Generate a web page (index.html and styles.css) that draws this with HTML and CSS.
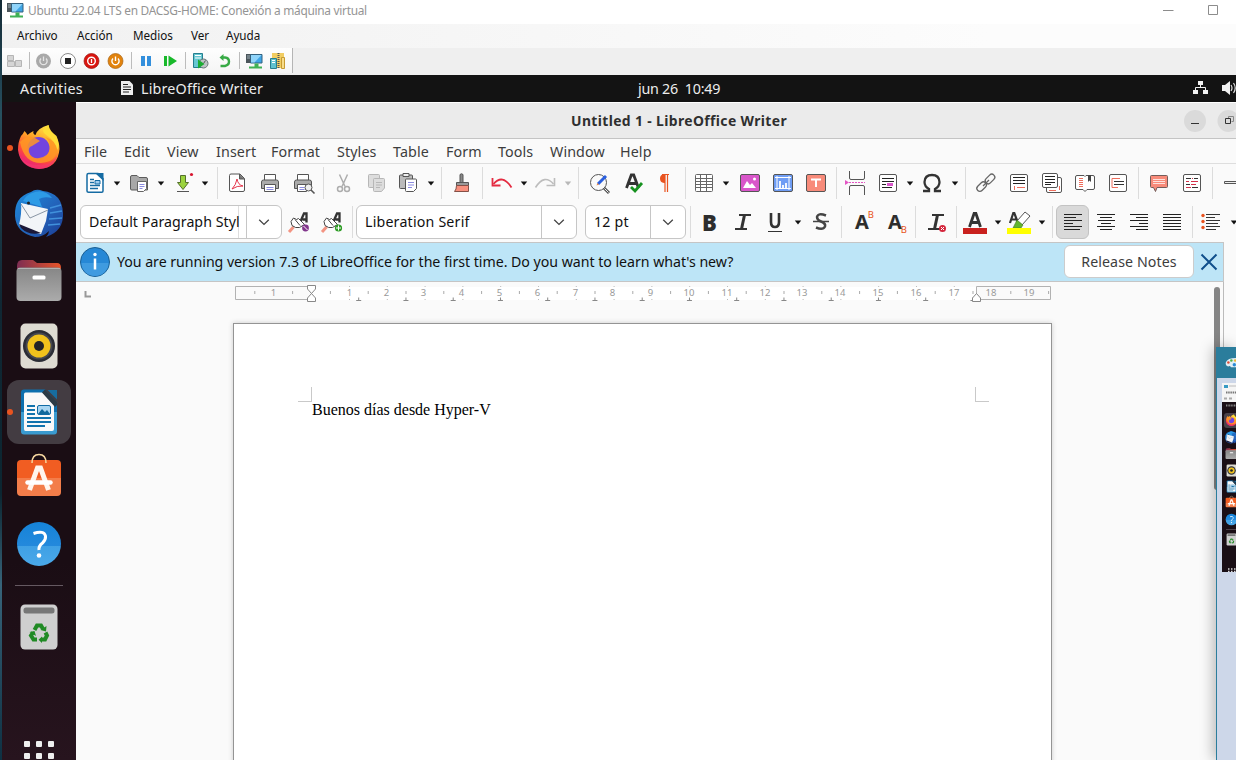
FILE: index.html
```html
<!DOCTYPE html>
<html lang="es">
<head>
<meta charset="utf-8">
<title>Ubuntu 22.04 LTS en DACSG-HOME: Conexión a máquina virtual</title>
<link rel="stylesheet" href="styles.css">
</head>
<body>
<svg class="defs" width="0" height="0">
  <defs>
    <linearGradient id="fox" x1="0.8" y1="0" x2="0.3" y2="1"><stop offset="0" stop-color="#fff04a"/><stop offset=".4" stop-color="#ffa126"/><stop offset=".72" stop-color="#ff4a3c"/><stop offset="1" stop-color="#e3168a"/></linearGradient>
    <linearGradient id="bird" x1="0" y1="0" x2="1" y2="1"><stop offset="0" stop-color="#1e8fe0"/><stop offset=".6" stop-color="#2361b8"/><stop offset="1" stop-color="#1b3a92"/></linearGradient>
    <linearGradient id="folder" x1="0" y1="0" x2="0" y2="1"><stop offset="0" stop-color="#868686"/><stop offset="1" stop-color="#ababab"/></linearGradient>
    <linearGradient id="tab" x1="0" y1="0" x2="1" y2="0"><stop offset="0" stop-color="#7d2d52"/><stop offset="1" stop-color="#e8552a"/></linearGradient>
    <linearGradient id="bag" x1="0" y1="0" x2="0" y2="1"><stop offset=".5" stop-color="#f15d22"/><stop offset=".5" stop-color="#f37d4a"/></linearGradient>
    <linearGradient id="help" x1="0" y1="0" x2="0" y2="1"><stop offset="0" stop-color="#1583d8"/><stop offset=".54" stop-color="#2389dc"/><stop offset=".54" stop-color="#3fa0e4"/><stop offset="1" stop-color="#4aa9ea"/></linearGradient>
    <linearGradient id="wr" x1="0" y1="0" x2="0" y2="1"><stop offset=".5" stop-color="#0d6fae"/><stop offset=".5" stop-color="#3a9bd0"/></linearGradient>
    <symbol id="i-arr" viewBox="0 0 8 24"><path d="M.8 10.600h6.400L4 14.600z" fill="currentColor"/></symbol>
    <symbol id="i-chev" viewBox="0 0 12 12"><path d="M1.200 3.800 6 8.400l4.800-4.600" fill="none" stroke="#444" stroke-width="1.300"/></symbol>
    <symbol id="v-conn" viewBox="0 0 20 20"><path d="M2 3h6v9H2z" fill="#4b555b"/><path d="M3 5h3M3 7h3" stroke="#9fb0b8"/><path d="M6.500 3.500h11.500v8.500H6.500z" fill="#3fa5e6" stroke="#33617f"/><path d="M7 4h10.500l-7 7.500H7z" fill="#8fd4fa"/><path d="M10.500 12.500h4v3h3.500v2H5v-2h5.500z" fill="#3fb155"/></symbol>
    <symbol id="d-fox" viewBox="0 0 64 64"><path d="M14 20q2-2 3.500-5 2 2 3 4 2-2 6-4-1 3 2 4 2-7 13-10 0 6 4 8 7 7 7 16Q51 52 32 53 13 51 11 34q0-8 3-14z" fill="url(#fox)"/><circle cx="31.500" cy="32" r="11" fill="#7244df"/><path d="M13 26q7-7 15-4l5 3-8 5q-4 1-3 6 2 7 10 6 9-1 11-9 1-8-5-12 11 3 12 13-1 12-16 13-17 0-21-21z" fill="#ff9825" opacity=".85"/><path d="M38 18q-5-4 3.500-9 1 6 8 11 4 9 1 14-2-9-12.500-16z" fill="#ffdd38"/><path d="M12 38q5 12 20 11 13 0 18-9-3 12-18 13-16-1-20-15z" fill="#f4386b" opacity=".75"/></symbol>
    <symbol id="d-bird" viewBox="0 0 64 64"><path d="M8 34Q7 15 24 10q5-4 12-1 19 2 20 22 1 18-17 24 3-3 3-6-6 6-14 6Q9 51 8 34z" fill="url(#bird)"/><path d="M25 11q12-5 20 5-8-2-13 1l3 8-19-6q3-6 9-8z" fill="#2d9be6"/><path d="m14 21 27 6-2 12-5 13q-12-2-22-9 3-12 2-22z" fill="#f2f5f8"/><path d="m14 22 9 14 18-8" fill="none" stroke="#8996a5"/><path d="m12 42 22 9q-12 3-20-5z" fill="#1b1838"/><path d="m43 26 11-3m-11 8 12-2m-13 8 13-1m-14 7 12-1" stroke="#4191dc" stroke-width="1.500"/><circle cx="21.500" cy="21" r="1.500" fill="#222"/></symbol>
    <symbol id="d-files" viewBox="0 0 64 64"><path d="M10 18q0-6 5-6h11l4 3h20q4 0 4 5v8H10z" fill="url(#tab)"/><rect x="9.500" y="19.500" width="45" height="33.500" rx="4" fill="url(#folder)"/><path d="M11 20.500h42" stroke="#b2b2b2"/><rect x="25.500" y="27.500" width="13" height="4" rx="1.500" fill="#fff"/></symbol>
    <symbol id="d-rhythm" viewBox="0 0 64 64"><rect x="13.500" y="9.500" width="37" height="45" rx="5" fill="#dedbd2"/><circle cx="32" cy="32" r="16" fill="#2b2d35"/><circle cx="32" cy="32" r="13.500" fill="#454750"/><circle cx="32" cy="32" r="11.500" fill="#f1c21c"/><circle cx="32" cy="32" r="5" fill="#222326"/></symbol>
    <symbol id="d-writer" viewBox="0 0 64 64"><path d="M17 9.500h21l12 13v29q0 3-3 3H17q-3 0-3-3v-39q0-3 3-3z" fill="url(#wr)"/><path d="M18.500 12.500h17L47 25v24q0 2-2 2H18.500Q17 51 17 49V14.500q0-2 1.500-2z" fill="#f9f9f9"/><path d="m35 12.500 3-3L50 22v3l-2 2z" fill="#2c3b46"/><path d="M40.500 10H50v9.500z" fill="#176d9f"/><path d="M20 26h8m-8 4h8m-8 4h8m-8 4h24m-24 4h24m-24 4h18" stroke="#1173ad" stroke-width="2"/><rect x="30.500" y="25.500" width="13" height="9" rx="1.500" fill="#a9d6f2" stroke="#116ca5"/><path d="m31 34 4-5 3 3 2-2 3 4z" fill="#11699c"/></symbol>
    <symbol id="d-bag" viewBox="0 0 64 64"><rect x="10" y="14" width="44" height="36" rx="4" fill="url(#bag)"/><path d="M25 17q0-8.500 7-8.500t7 8.500" fill="none" stroke="#f6d7a0" stroke-width="1.500"/><path d="m22.500 44 8-22h3l8 22" fill="none" stroke="#fff5ed" stroke-width="5"/><path d="M20.500 36.500h23" stroke="#fff" stroke-width="4.500" stroke-linecap="round"/></symbol>
    <symbol id="d-help" viewBox="0 0 64 64"><circle cx="32" cy="32" r="22" fill="url(#help)"/><path d="M26.500 21.500Q37 18 38.500 24q.5 4-3 7-4 3-3.500 7" fill="none" stroke="#fff" stroke-width="3"/><circle cx="32" cy="43.500" r="2.300" fill="#fff"/></symbol>
    <symbol id="d-trash" viewBox="0 0 64 64"><rect x="13.500" y="9.500" width="37" height="45" rx="4.500" fill="#cfcfcf"/><rect x="16.500" y="12.500" width="31" height="6" rx="2.500" fill="#777"/><g fill="none" stroke="#208a24" stroke-width="4"><path d="m27.500 35 2.500-4.500h4l2 3.500"/><path d="m38.500 37.500 1.500 3-2 4h-3.500"/><path d="M30 44.500h-3.500L24 40.500l2-3"/></g><path d="m33.500 35 5.500 1.500.5-5.500zM35 41.500v6.500l-3.500-3.300zM22.500 37l5-1 1.500 5z" fill="#208a24"/></symbol>
  </defs>
</svg>
<div class="screen">
  <div class="edge"></div>
  <main class="vm">
    <header class="vm-title">
      <svg width="18" height="18" viewBox="1 1 18 18"><use href="#v-conn" width="20" height="20"/></svg>
      <span class="vm-name">Ubuntu 22.04 LTS en DACSG-HOME: Conexión a máquina virtual</span>
      <svg class="vm-ctl" width="60" height="20" viewBox="0 0 60 20" fill="none" stroke="#8c8c8c"><path d="M2 10.500h10.500"/><path d="M47.500 5.500h9v9h-9z"/></svg>
    </header>
    <nav class="vm-menu"><span>Archivo</span><span>Acción</span><span>Medios</span><span>Ver</span><span>Ayuda</span></nav>
    <div class="vm-tools"><div class="vm-band">
      <svg viewBox="0 0 20 20" fill="#d5d5d5" stroke="#b5b5b5"><path d="M2.500 4.500h6v5h-6zM2.500 10.500h7v5h-7zM10.500 9.500h6v6h-6z"/></svg>
      <i class="vsep"></i>
      <svg viewBox="0 0 20 20"><circle cx="9.500" cy="10" r="7.500" fill="#a9a9a9"/><path d="M7 7.500a3.600 3.600 0 1 0 5 0M9.500 5.500v4.500" fill="none" stroke="#e5e5e5" stroke-width="1.300"/></svg>
      <svg viewBox="0 0 20 20"><circle cx="10" cy="10" r="7.500" fill="#fff" stroke="#8b8b8b"/><path d="M7 7h6v6H7z" fill="#222"/></svg>
      <svg viewBox="0 0 20 20"><circle cx="9.500" cy="10" r="7.500" fill="#d9150f" stroke="#9d1310" stroke-width=".7"/><circle cx="9.500" cy="10" r="3.800" fill="none" stroke="#fff" stroke-width="1.400"/><path d="M9.500 8v4" stroke="#fff" stroke-width="1.300"/></svg>
      <svg viewBox="0 0 20 20"><circle cx="9.500" cy="10" r="7.500" fill="#e2830d" stroke="#a96414" stroke-width=".7"/><path d="M7 7.500a3.600 3.600 0 1 0 5 0M9.500 5.500v4.500" fill="none" stroke="#fff" stroke-width="1.400"/></svg>
      <i class="vsep"></i>
      <svg viewBox="0 0 20 20" fill="#338fdc"><path d="M5 5h4v10H5zM11 5h4v10h-4z"/></svg>
      <svg viewBox="0 0 20 20" fill="#19b92b"><path d="M4 5h3v10H4zM8.500 4.500 17 10l-8.500 5.500z"/></svg>
      <i class="vsep"></i>
      <svg viewBox="0 0 20 20"><path d="M3.500 2.500h9v14h-9z" fill="#67c7d2" stroke="#257e8f"/><path d="M5 4.500h6M5 7h6" stroke="#fff"/><circle cx="13.500" cy="12.500" r="4.500" fill="#bcc3c4" stroke="#697577"/><path d="m13.500 12.500 2-3" stroke="#555"/><path d="m8 8.500 6.500 4.500L8 17.500z" fill="#1bad33"/></svg>
      <svg viewBox="0 0 20 20"><path d="M8 6.500h3q4 .5 4 4t-4 4.500H6.500" fill="none" stroke="#37aa45" stroke-width="2.400"/><path d="M9.500 3v7L5.500 6.500z" fill="#37aa45"/></svg>
      <i class="vsep"></i>
      <svg viewBox="0 0 20 20"><use href="#v-conn"/></svg>
      <svg viewBox="0 0 20 20"><path d="M5 2h12v15H5z" fill="#f1cd62"/><path d="M11.500 2v15" stroke="#555" stroke-width="2" stroke-dasharray="1 1"/><path d="M3.500 7.500h6v10h-6z" fill="#60c2d1" stroke="#287f90"/><path d="M14.500 6.500h3v11h-3z" fill="#f7dc8a" stroke="#c79b32"/><path d="M5 9.500h3m-3 2h3" stroke="#fff"/></svg>
    </div></div>
    <div class="gnome-bar">
      <span class="act">Activities</span>
      <svg width="14" height="16" viewBox="0 0 14 16"><path d="M1 1h8.500L13 4.500V15H1z" fill="#eee"/><path d="M3 4.500h5M3 7h8M3 9.500h8M3 12h6" stroke="#222"/></svg>
      <span class="appname">LibreOffice Writer</span>
      <span class="clock">jun 26&nbsp; 10:49</span>
      <svg class="tray" width="44" height="20" viewBox="0 0 44 20"><g fill="#f2f2f2"><path d="M6 3h5v4H6zM1 12h5v4H1zM11 12h5v4h-5z"/><path d="M8.500 7v3M3.500 12v-2.500h10V12" fill="none" stroke="#f2f2f2"/><path d="M30 7h3l5-4v14l-5-4h-3z"/></g><path d="M39 7q2 3 0 6m2.500-8q3.500 5 0 10" fill="none" stroke="#ddd" stroke-width="1.200"/></svg>
    </div>
    <div class="desktop">
      <aside class="dock">
        <div class="app run"><svg viewBox="0 0 64 64"><use href="#d-fox"/></svg></div>
        <div class="app"><svg viewBox="0 0 64 64"><use href="#d-bird"/></svg></div>
        <div class="app"><svg viewBox="0 0 64 64"><use href="#d-files"/></svg></div>
        <div class="app"><svg viewBox="0 0 64 64"><use href="#d-rhythm"/></svg></div>
        <div class="app run focus"><svg viewBox="0 0 64 64"><use href="#d-writer"/></svg></div>
        <div class="app"><svg viewBox="0 0 64 64"><use href="#d-bag"/></svg></div>
        <div class="app"><svg viewBox="0 0 64 64"><use href="#d-help"/></svg></div>
        <hr>
        <div class="app"><svg viewBox="0 0 64 64"><use href="#d-trash"/></svg></div>
        <svg class="grid-dots" width="30" height="19" viewBox="0 0 30 19" fill="#efefef"><rect width="6" height="6" rx="1"/><rect x="12" width="6" height="6" rx="1"/><rect x="24" width="6" height="6" rx="1"/><rect y="12" width="6" height="6" rx="1"/><rect x="12" y="12" width="6" height="6" rx="1"/><rect x="24" y="12" width="6" height="6" rx="1"/></svg>
      </aside>
      <section class="office">
        <div class="lo-title"><span>Untitled 1 - LibreOffice Writer</span>
          <svg class="lo-ctl" width="52" height="22" viewBox="0 0 52 22"><circle cx="11" cy="11" r="11" fill="#dadada"/><path d="M7 13.500h8" stroke="#333"/><circle cx="44.500" cy="11" r="11" fill="#dadada"/><path d="M44.500 8.500v-2h5v5h-2" fill="none" stroke="#888"/><path d="M41.500 8.500h5v5h-5z" fill="#dadada" stroke="#333"/></svg>
        </div>
        <nav class="lo-menu"><span>File</span><span>Edit</span><span>View</span><span>Insert</span><span>Format</span><span>Styles</span><span>Table</span><span>Form</span><span>Tools</span><span>Window</span><span>Help</span></nav>
        <div class="tb tb1">
          <svg class="ic" viewBox="0 0 24 24"><path d="M5.500 2.500H15L20 7.500V20q0 1.200-1.200 1.200H5.500Q4 21.200 4 20V4q0-1.500 1.500-1.500z" fill="#fff" stroke="#156ba3" stroke-width="1.500"/><path d="M12 2h8.500v8z" fill="#156ba3"/><path d="M7 8.500h4m-4 3h4m-4 3h10m-10 3h8" stroke="#156ba3" stroke-width="1.300"/><path d="M12 9.500h5v3.500h-5z" fill="#9ecdf0" stroke="#156ba3"/></svg>
          <svg class="ar"><use href="#i-arr"/></svg>
          <svg class="ic" viewBox="0 0 24 24"><path d="M3.500 18V6q0-1.500 1.500-1.500h5l2 2h7q1.500 0 1.500 1.500v11H5q-1.500 0-1.500-1z" fill="#a8a8a8" stroke="#5c5c5c"/><path d="M10.500 10.500h9v7l-3 3h-6z" fill="#fff" stroke="#666"/><path d="M12.500 13.500h5m-5 2h5m-5 2h3" stroke="#8c8ce0"/></svg>
          <svg class="ar"><use href="#i-arr"/></svg>
          <svg class="ic" viewBox="0 0 24 24"><path d="M9.500 4.500h5v7h3L12 18.500l-5.500-7h3z" fill="#9bd33e" stroke="#55702e"/><path d="M6 20.500h12" stroke="#555"/><circle cx="20.500" cy="3.500" r="1.600" fill="#d8152f"/></svg>
          <svg class="ar"><use href="#i-arr"/></svg>
          <i class="sep"></i>
          <svg class="ic" viewBox="0 0 24 24"><path d="M4.500 4.500q0-1.500 1.500-1.500h9l4.500 4.500V19q0 1.500-1.500 1.500H6q-1.500 0-1.500-1.500z" fill="#fff" stroke="#555"/><path d="M14.500 3v5h5" fill="#777" stroke="#555"/><path d="M7 18q4-4 5-10 1 6 6 7-6-.5-11 3" fill="none" stroke="#e5354b"/></svg>
          <svg class="ic" viewBox="0 0 24 24"><path d="M6.500 9V3.500h11V9" fill="#fff" stroke="#555"/><path d="M3.500 17.500V11q0-2 2-2h13q2 0 2 2v6.500z" fill="#aaa" stroke="#555"/><path d="M6.500 13.500h11v7h-11z" fill="#fff" stroke="#555"/><path d="M8.500 16.500h7m-7 2h7" stroke="#8c8ce0"/></svg>
          <svg class="ic" viewBox="0 0 24 24"><path d="M5.500 9V3.500h11V9" fill="#fff" stroke="#555"/><path d="M2.500 17.500V11q0-2 2-2h13q2 0 2 2v6.500z" fill="#aaa" stroke="#555"/><path d="M5.500 13.500h9v7h-9z" fill="#fff" stroke="#555"/><path d="M7.500 16.500h5m-5 2h5" stroke="#8c8ce0"/><circle cx="16.500" cy="16.500" r="3.500" fill="#eee" stroke="#555"/><path d="m19 19 3.500 3.500" stroke="#555" stroke-width="1.600"/></svg>
          <i class="sep"></i>
          <svg class="ic" viewBox="0 0 24 24" fill="none" stroke="#adadad" stroke-width="1.500"><path d="M8.500 3.500 14 15.500M16.500 3.500 11 15.500"/><circle cx="9" cy="18" r="2.500"/><circle cx="16" cy="18" r="2.500"/></svg>
          <svg class="ic" viewBox="0 0 24 24" fill="#ddd" stroke="#b7b7b7"><rect x="4.500" y="3.500" width="11" height="13" rx="1"/><path d="M9.500 8.500q0-1 1-1h9q1 0 1 1V17l-3 3.500h-7q-1 0-1-1z"/><path d="M12 11.500h6m-6 2.500h6m-6 2.500h4"/></svg>
          <svg class="ic" viewBox="0 0 24 24"><path d="M3.500 5q0-1 1-1h11q1 0 1 1v12.500h-12q-1 0-1-1z" fill="#bbb" stroke="#555"/><path d="M7 2.500h6v3H7z" fill="#eee" stroke="#555"/><path d="M9.500 9q0-1 1-1h9q1 0 1 1v8.500l-3 3h-7q-1 0-1-1z" fill="#fff" stroke="#555"/><path d="M12 11.500h6m-6 2.500h6m-6 2.500h4" stroke="#8c8ce0"/></svg>
          <svg class="ar"><use href="#i-arr"/></svg>
          <i class="sep"></i>
          <svg class="ic" viewBox="0 0 24 24"><path d="M11 12V3.500q1.500-1.500 3 0V12" fill="#888" stroke="#555"/><path d="M7.500 11.500h12v3h-12z" fill="#999" stroke="#555"/><path d="M7.500 14.500h12v6h-14q2-2 2-6z" fill="#f7907e" stroke="#845047"/></svg>
          <i class="sep"></i>
          <svg class="ic" viewBox="0 0 24 24"><path d="M4.500 13q9-10.500 18 3.500" fill="none" stroke="#e42b41" stroke-width="1.800"/><path d="M3.500 7v7.500h8" fill="none" stroke="#e42b41" stroke-width="1.800"/></svg>
          <svg class="ar"><use href="#i-arr"/></svg>
          <svg class="ic" viewBox="0 0 24 24"><path d="M20.500 13q-9-10.500-18 3.500" fill="none" stroke="#bdbdbd" stroke-width="1.600"/><path d="M21.500 7v7.500h-8" fill="none" stroke="#bdbdbd" stroke-width="1.600"/></svg>
          <svg class="ar dim"><use href="#i-arr"/></svg>
          <i class="sep"></i>
          <svg class="ic" viewBox="0 0 24 24"><circle cx="11.500" cy="11.500" r="8" fill="#fafafa" stroke="#555"/><path d="m17 17 5 5" stroke="#555" stroke-width="3"/><path d="m17.500 17.500 4 4" stroke="#eee"/><path d="m11 13 8-8" stroke="#2a5fe0" stroke-width="3"/><path d="m9.500 14.500 1-2.500 1.500 1.500z" fill="#ea8b45"/></svg>
          <svg class="ic" viewBox="0 0 24 24"><path d="m4.500 17 4.800-13h2.400l4.800 13M6.500 12.500h8" fill="none" stroke="#333" stroke-width="2.800"/><path d="m9 16 4 4 7-8" fill="none" stroke="#16911f" stroke-width="2.800"/></svg>
          <svg class="ic" viewBox="0 0 24 24"><path d="M12 3v9H11q-4-.5-4-4.500T11 3z" fill="#e95420"/><path d="M9 3.500h7M12 3v18m2.500-18v18" stroke="#e95420" stroke-width="1.200" fill="none"/></svg>
          <i class="sep"></i>
          <svg class="ic" viewBox="0 0 24 24" fill="#fff" stroke="#666"><rect x="3.500" y="3.500" width="17" height="17" rx="1"/><path d="M3.500 7.500h17m-17 3h17m-17 3h17m-17 3h17M8.500 3.500v17m6-17v17"/></svg>
          <svg class="ar"><use href="#i-arr"/></svg>
          <svg class="ic" viewBox="0 0 24 24"><rect x="2.500" y="3.500" width="19" height="17" rx="1.500" fill="#d956ca" stroke="#555"/><path d="m5 17 4-7 3 4 2-2 4 5z" fill="#fff"/><circle cx="16.500" cy="8" r="1.500" fill="#fff"/></svg>
          <svg class="ic" viewBox="0 0 24 24"><rect x="2.500" y="3.500" width="19" height="17" rx="1.500" fill="#6f9df4" stroke="#555"/><path d="M6 5v14m12-14v14M4 6.500h16M4 17.500h16" stroke="#fff"/><path d="M9 10v7m3-3v3m3-5v5" stroke="#fff" stroke-width="1.800"/></svg>
          <svg class="ic" viewBox="0 0 24 24"><rect x="2.500" y="3.500" width="19" height="17" rx="1.500" fill="#f88b7a" stroke="#555"/><path d="M7 8.500h10M12 8v8" stroke="#fff" stroke-width="2"/></svg>
          <i class="sep"></i>
          <svg class="ic" viewBox="0 0 24 24"><path d="M4.500 0v7q0 1.500 1.500 1.500h12q1.500 0 1.500-1.500V0M4.500 24v-8q0-1.500 1.500-1.500h12q1.500 0 1.500 1.500v8" fill="none" stroke="#555"/><path d="M4 11.500h16" stroke="#e455c5" stroke-dasharray="2 1"/><path d="m0 9 4 2.500L0 14z" fill="#e455c5"/></svg>
          <svg class="ic" viewBox="0 0 24 24"><rect x="3.500" y="3.500" width="17" height="17" rx="1.500" fill="#fff" stroke="#555"/><path d="M6 7.500h12M6 10.500h12M6 13.500h4M6 16.500h10" stroke="#222"/><path d="M11 12h6v3h-6z" fill="#d956ca"/></svg>
          <svg class="ar"><use href="#i-arr"/></svg>
          <svg class="ic" viewBox="0 0 24 24"><path d="M3 20h6v-2Q4.500 15.500 4.500 11 4.800 4 12 4t7.500 7q0 4.500-4.500 7v2h6" fill="none" stroke="#333" stroke-width="2.300"/></svg>
          <svg class="ar"><use href="#i-arr"/></svg>
          <i class="sep"></i>
          <svg class="ic" viewBox="0 0 24 24" fill="none" stroke="#666" stroke-width="1.300"><rect x="10.500" y="5" width="11" height="6" rx="3" transform="rotate(-45 16 8)"/><rect x="2.500" y="12.500" width="11" height="6" rx="3" transform="rotate(-45 8 16)"/><path d="m9 15 6-6"/></svg>
          <svg class="ic" viewBox="0 0 24 24"><rect x="3.500" y="3.500" width="17" height="17" rx="1.500" fill="#fff" stroke="#555"/><path d="M6 6.500h12M6 9.500h12M6 12.500h12" stroke="#222"/><path d="M7.500 15v4M10 16.500h8" stroke="#ee6e5d"/></svg>
          <svg class="ic" viewBox="0 0 24 24"><rect x="6.500" y="6.500" width="15" height="15" rx="1.500" fill="#fff" stroke="#555"/><path d="M19.500 15v4M9 19.500h7" stroke="#ee6e5d"/><rect x="2.500" y="2.500" width="15" height="14" rx="1.500" fill="#fff" stroke="#555"/><path d="M5 5.500h10M5 8.500h10M5 11.500h10M5 13.500h6" stroke="#222"/></svg>
          <svg class="ic" viewBox="0 0 24 24"><path d="M2.500 6q0-1.500 1.500-1.500h7l1 1 1-1h7q1.500 0 1.500 1.500v11q0 1.500-1.500 1.500h-6l-2 2-2-2H4q-1.500 0-1.500-1.500z" fill="#fff" stroke="#555"/><path d="M6 7.500h4m-4 2h4m-4 2h4m-4 2h4m-4 2h4" stroke="#ee6e5d"/><path d="M15 4h3v7l-1.500-1.500L15 11z" fill="#444"/></svg>
          <svg class="ic" viewBox="0 0 24 24"><rect x="3.500" y="3.500" width="17" height="17" rx="1.500" fill="#fff" stroke="#555"/><path d="M14 7.500H6v9h6" fill="none" stroke="#ee6e5d"/><path d="M8 10.500h10M8 13.500h10" stroke="#333"/></svg>
          <i class="sep"></i>
          <svg class="ic" viewBox="0 0 24 24"><path d="M3.500 5.500q0-1 1-1h15q1 0 1 1v10q0 1-1 1H10l-1.500 4-2-4h-2q-1 0-1-1z" fill="#f88b7a" stroke="#735d5a"/><path d="M6 8.500h12m-12 2h12m-12 2h12" stroke="#fde1dc"/></svg>
          <svg class="ic" viewBox="0 0 24 24"><rect x="3.500" y="3.500" width="17" height="17" rx="1.500" fill="#fff" stroke="#555"/><path d="M6 7.500h5M14 7.500h4M6 13.500h4M12 16.500h6" stroke="#333"/><path d="M12 7.500h1M6 10.500h3M11 10.500h7M11 13.500h5M6 16.500h5" stroke="#d33049"/></svg>
          <i class="sep"></i>
          <svg class="cut" width="12" height="24" viewBox="0 0 12 24"><path d="M.5 10.500H14v2H.5z" fill="#eee" stroke="#555"/></svg>
        </div>
        <div class="tb tb2">
          <div class="combo c1"><b>Default Paragraph Styl</b><em><svg width="12" height="12"><use href="#i-chev"/></svg></em></div>
          <svg class="ic" viewBox="0 0 24 24"><path d="m2 22 4.500-5" stroke="#f39482" stroke-width="3"/><path d="m13 12.500 4-9h2.500v9M15.500 9.500h4" fill="none" stroke="#333" stroke-width="2.300"/><path d="M4 11.500 6.500 8l3 1.500 2-1 6 6-5 3q-4 1-7.500-2z" fill="#fff" stroke="#444"/><path d="m8 9.500 5 6" stroke="#444"/><circle cx="18.500" cy="18" r="3.400" fill="#82368c"/><path d="m16.500 16 4 4" stroke="#fff"/></svg>
          <svg class="ic" viewBox="0 0 24 24"><path d="m2 22 4.500-5" stroke="#f39482" stroke-width="3"/><path d="m13 12.500 4-9h2.500v9M15.500 9.500h4" fill="none" stroke="#333" stroke-width="2.300"/><path d="M4 11.500 6.500 8l3 1.500 2-1 6 6-5 3q-4 1-7.500-2z" fill="#fff" stroke="#444"/><path d="m8 9.500 5 6" stroke="#444"/><circle cx="18.500" cy="18" r="3.600" fill="#2d9c24"/><path d="M16 18h5m-2.500-2.500v5" stroke="#fff"/></svg>
          <i class="sep"></i>
          <div class="combo c2"><b>Liberation Serif</b><em><svg width="12" height="12"><use href="#i-chev"/></svg></em></div>
          <div class="combo c3"><b>12 pt</b><em><svg width="12" height="12"><use href="#i-chev"/></svg></em></div>
          <i class="sep"></i>
          <span class="glyph bold">B</span>
          <svg class="ic" viewBox="0 0 24 24" fill="none" stroke="#333"><path d="M8 5h12M4 19h12" stroke-width="2"/><path d="m13.500 5-3 14" stroke-width="3"/></svg>
          <svg class="ic" viewBox="0 0 24 24" fill="none" stroke="#333"><path d="M8 3v9q0 5 4 5t4-5V3" stroke-width="2.600"/><path d="M5 21.500h14"/></svg>
          <svg class="ar"><use href="#i-arr"/></svg>
          <svg class="ic" viewBox="0 0 24 24" fill="none" stroke="#444"><path d="M17 5.500q-8-3-9 1.500 0 3 4 4.500 5 2 4 5-2 4-9 1" stroke-width="2.500"/><path d="M4 11.500h16" stroke-width="1.500"/></svg>
          <i class="sep"></i>
          <span class="glyph aa">A<sup>B</sup></span>
          <span class="glyph aa">A<sub>B</sub></span>
          <i class="sep"></i>
          <svg class="ic" viewBox="0 0 24 24" fill="none" stroke="#333"><path d="M7 5h12M3 19h12" stroke-width="2"/><path d="m12.500 5-3 14" stroke-width="3"/><circle cx="17.500" cy="18.500" r="3.500" fill="#d4263c" stroke="none"/><path d="m16 17 3 3m0-3-3 3" stroke="#fff"/></svg>
          <i class="sep"></i>
          <svg class="ic" viewBox="0 0 24 24"><path d="m6.500 17 4.600-13.500h1.800L17.500 17M8 12.500h8" fill="none" stroke="#333" stroke-width="2.800"/><path d="M0 18h24v6H0z" fill="#c9211e"/></svg>
          <svg class="ar"><use href="#i-arr"/></svg>
          <svg class="ic" viewBox="0 0 24 24"><path d="m3 13 3.300-10h1L11 13M4 9.500h6" fill="none" stroke="#333" stroke-width="2.200"/><path d="m10 11 8-9 5 4-8 9z" fill="#fff" stroke="#555"/><path d="m10 10 6 5-2 3H6z" fill="#62b52d" stroke="#477a28" stroke-width=".6"/><path d="M0 18h24v6H0z" fill="#ff0"/></svg>
          <svg class="ar"><use href="#i-arr"/></svg>
          <i class="sep"></i>
          <div class="pressed"><svg class="ic" viewBox="0 0 24 24" stroke="#222"><path d="M3 4.500h18M3 7.500h12M3 10.500h18M3 13.500h9M3 16.500h18M3 19.500h16"/></svg></div>
          <svg class="ic" viewBox="0 0 24 24" stroke="#222"><path d="M3 4.500h18M6 7.500h12M4 10.500h17M7 13.500h10M3 16.500h18M6 19.500h12"/></svg>
          <svg class="ic" viewBox="0 0 24 24" stroke="#222"><path d="M3 4.500h18M9 7.500h12M3 10.500h18M12 13.500h9M3 16.500h18M9 19.500h12"/></svg>
          <svg class="ic" viewBox="0 0 24 24" stroke="#222"><path d="M3 4.500h18M3 7.500h18M3 10.500h18M3 13.500h18M3 16.500h18M3 19.500h18"/></svg>
          <i class="sep"></i>
          <svg class="ic" viewBox="0 0 24 24" stroke="#333"><g fill="#e95420" stroke="none"><circle cx="4" cy="5.500" r="1.700"/><circle cx="4" cy="11.500" r="1.700"/><circle cx="4" cy="17.500" r="1.700"/></g><path d="M7 4.500h14M7 7.500h9M7 10.500h14M7 13.500h12M7 16.500h14M7 19.500h10"/></svg>
          <svg class="ar cut"><use href="#i-arr"/></svg>
        </div>
        <div class="infobar">
          <svg width="32" height="32" viewBox="0 0 32 32"><circle cx="16" cy="16" r="14.500" fill="#2688d6" stroke="#1b5f93"/><path d="M2.500 17h27a13.500 13 0 0 1-27 0z" fill="#3f9be0"/><path d="M16 12.500v11" stroke="#fff" stroke-width="2.500"/><circle cx="16" cy="8.500" r="1.700" fill="#fff"/></svg>
          <p>You are running version 7.3 of LibreOffice for the first time. Do you want to learn what's new?</p>
          <button>Release Notes</button>
          <svg class="close" width="18" height="18" viewBox="0 0 18 18"><path d="m1.500 1.500 15 15m0-15-15 15" stroke="#104f8c" stroke-width="2"/></svg>
        </div>
        <div class="work">
          <svg class="ruler" width="1138" height="24" viewBox="84 283 1138 24">
            <path d="M85.500 291v5.500H91" fill="none" stroke="#999" stroke-width="2"/>
            <path d="M311 287h665v13H311z" fill="#fff"/>
            <path d="M311 286.500h-75.500v13H311M976.500 286.500h74v13h-74z" fill="none" stroke="#b2b2b2"/>
            <path d="M254.300 292.500H1051" stroke="#aaa" stroke-width="3" stroke-dasharray="1 36.800"/>
            <path d="M349 286.500H960M349 299.500H960" stroke="#bbb" stroke-dasharray="1 36.800"/>
            <path d="M358.200 299H976" stroke="#888" stroke-width="3" stroke-dasharray="1 46.250"/>
            <path d="M356.200 300.500H976" stroke="#888" stroke-dasharray="5 42.250"/>
            <g class="nums"><text x="273.500" y="296">1</text><text x="349.500" y="296">1</text><text x="386.500" y="296">2</text><text x="423.500" y="296">3</text><text x="461.500" y="296">4</text><text x="499.500" y="296">5</text><text x="537.500" y="296">6</text><text x="575.500" y="296">7</text><text x="612.500" y="296">8</text><text x="650.500" y="296">9</text><text x="689" y="296">10</text><text x="727" y="296">11</text><text x="765" y="296">12</text><text x="802" y="296">13</text><text x="840" y="296">14</text><text x="878" y="296">15</text><text x="916" y="296">16</text><text x="954" y="296">17</text><text x="991" y="296">18</text><text x="1029" y="296">19</text></g>
            <path d="M307.500 285.500h8v3.500l-4 4.500-4-4.500zM307.500 301.500h8v-3.500l-4-4.500-4 4.500zM972.500 301.500h8v-3.500l-4-4.500-4 4.500z" fill="#fff" stroke="#888"/>
          </svg>
          <article class="page">
            <div class="marks"><i class="mk l"></i><i class="mk r"></i></div>
            <p>Buenos días desde Hyper-V</p>
          </article>
          <div class="scroll"></div>
        </div>
      </section>
    </div>
  </main>
  <div class="paint">
    <div class="paint-head"><svg width="13" height="14" viewBox="0 0 13 14"><path d="M13 1Q3 1 1 6q-1 4 3 5 2-1 3 1h6z" fill="#dfeef5"/><circle cx="4" cy="6.500" r="1.500" fill="#e04d38"/><circle cx="7.500" cy="4" r="1.500" fill="#4fb14a"/><circle cx="12" cy="4" r="1.500" fill="#f0b635"/><circle cx="11" cy="9" r="2" fill="#2a8bd5"/></svg></div>
    <svg class="thumb" width="14" height="189" viewBox="0 0 14 189">
      <path d="M0 0h14v190H0z" fill="#1a0f16"/><path d="M0 0h14v19H0z" fill="#f5f5f5"/><path d="M2 2h4v3H2z" fill="#379ac4"/><path d="M7 3h7" stroke="#bbb"/><path d="M4 9.500h10" stroke="#777" stroke-width="2" stroke-dasharray="1.500 .7"/><path d="M2 15.500h3m2 0h3" stroke="#aaa" stroke-width="2"/><path d="M4 22.500h10" stroke="#888" stroke-width="2" stroke-dasharray="1 .6"/><rect x="2" y="30" width="14" height="15" rx="3" fill="#49414a"/>
      <use href="#d-fox" x="1" y="29" width="17" height="17"/><use href="#d-bird" x="1" y="46" width="17" height="17"/><use href="#d-files" x="1" y="62" width="17" height="17"/><use href="#d-rhythm" x="1" y="79" width="17" height="17"/><use href="#d-writer" x="1" y="95" width="17" height="17"/><use href="#d-bag" x="1" y="111" width="17" height="17"/><use href="#d-help" x="1" y="128" width="17" height="17"/><path d="M4 146.500h10" stroke="#4c4048"/><use href="#d-trash" x="1" y="148" width="17" height="17"/><path d="M6 186h8M6 188.500h8" stroke="#ddd" stroke-width="1.500" stroke-dasharray="1.500 1.500"/>
    </svg>
  </div>
</div>
</body>
</html>
```
FILE: styles.css
```css
* { box-sizing: border-box; }
body { margin: 0; overflow: hidden; font-family: "Noto Sans", "Open Sans", sans-serif; }
svg { display: block; }
p { margin: 0; }
.defs { position: absolute; }
.screen { position: relative; display: flex; width: 1236px; height: 760px; overflow: hidden; background: #fafafa; white-space: nowrap; }
.edge { width: 2px; background: linear-gradient(#142a36, #27505f 15%, #102733 40%, #0c2631 65%, #37647a 77%, #0e3042); }
.vm { width: 1234px; }

.vm-title { display: flex; align-items: center; height: 24px; background: #fff; padding: 0 16px 4px 4px; }
.vm-name { margin-left: 4px; font-size: 11.900px; letter-spacing: -.29px; color: #949494; }
.vm-ctl { margin-left: auto; margin-right: -1px; }
.vm-menu { display: grid; grid-template-columns: 60px 56px 58px 35px 60px; height: 24px; padding-left: 15px; background: linear-gradient(90deg, #f1f1f1, #fcfcfc 80%); font-size: 11.700px; letter-spacing: -.05px; line-height: 23px; color: #111; }
.vm-tools { height: 27px; background: #efefef; }
.vm-band { display: grid; grid-template-columns: 24px 5px 24px 24px 24px 25px 5px 24px 25px 5px 24px 25px 5px 23px 20px; align-items: center; width: 291px; height: 25px; padding-left: 3px; border-right: 1px solid #b5b5b5; background: linear-gradient(#fefefe, #f5f5f5); }
.vm-band svg { width: 20px; height: 20px; }
.vsep { width: 1px; height: 17px; background: #bcbcbc; }

.gnome-bar { display: flex; align-items: center; height: 27px; padding-left: 18px; background: #131313; color: #ededed; font-size: 14.300px; line-height: 25px; padding-bottom: 1px; }
.act { width: 100px; letter-spacing: .35px; }
.appname { margin-left: 7px; width: 497px; letter-spacing: .18px; }
.clock { width: 554px; letter-spacing: -.25px; }
.tray { flex: none; }

.desktop { display: flex; height: 658px; }
.dock { display: flex; flex-direction: column; align-items: center; gap: 2px; width: 74px; padding-top: 14px; background: linear-gradient(#1a0d14 70%, #27141e); }
.dock hr { width: 48px; height: 1px; margin: 7px 0; border: 0; background: #655961; }
.app { position: relative; width: 64px; height: 64px; border-radius: 12px; }
.app svg { width: 64px; height: 64px; }
.focus { background: #433c42; }
.run::before { content: ""; position: absolute; left: 0; top: 29px; width: 6px; height: 6px; border-radius: 50%; background: #e95420; }
.grid-dots { margin-top: 80px; }

.office { width: 1160px; background: #fafafa; color: #3d3d3d; }
.lo-title { display: flex; align-items: center; height: 37px; padding-left: 495px; border-bottom: 1px solid #c4c4c4; border-top: 1px solid #fff; background: #ebebeb; color: #2f2f2f; font-weight: 700; font-size: 13.900px; letter-spacing: .38px; }
.lo-title span { width: 614px; }
.lo-ctl { flex: none; }
.lo-menu { display: grid; grid-template-columns: 40px 43px 49px 55px 66px 56px 53px 52px 52px 70px 50px; height: 25px; padding-left: 8px; border-bottom: 1px solid #dedede; font-size: 14.300px; letter-spacing: .1px; line-height: 25px; }
.tb { display: grid; align-items: center; overflow: hidden; color: #111; }
.tb1 { height: 38px; padding-left: 7px; grid-template-columns: 30px 14px 30px 14px 30px 16px 8px 33px 34px 31px 8px 33px 32px 31px 14px 8px 33px 7px 31px 13px 31px 14px 9px 35px 31px 32px 7px 30px 16px 33px 33px 32px 9px 31px 30px 14px 31px 14px 9px 33px 33px 33px 33px 32px 9px 33px 32px 12px 12px; }
.tb2 { height: 40px; padding-left: 4px; grid-template-columns: 207px 33px 32px 4px 229px 105px 8px 33px 32px 31px 15px 32px 11px 33px 30px 10px 31px 7px 31px 13px 31px 14px 4px 38px 33px 33px 32px 7px 31px 6px; }
.ic { width: 24px; height: 24px; }
.ar { width: 8px; height: 24px; }
.dim { color: #b8b8b8; }
.sep { width: 1px; height: 32px; background: #dcdcdc; }
.combo { display: flex; align-items: stretch; height: 34px; border: 1px solid #c6c6c6; border-radius: 6px; background: #fff; font-size: 14.200px; letter-spacing: .2px; line-height: 31px; }
.combo b { flex: 1; padding-left: 8px; font-weight: 400; }
.combo em { display: grid; place-items: center; width: 35px; border-left: 1px solid #c6c6c6; }
.c1 { width: 202px; }
.c1 b { flex: none; width: 158px; border-right: 1px solid #dedede; letter-spacing: .04px; }
.c1 em { margin-left: 7px; }
.c2 { width: 221px; }
.c3 { width: 101px; }
.glyph { color: #2d2d2d; font: 700 22px/24px "Noto Sans", sans-serif; }
.bold { padding-left: 4px; font-family: "Open Sans", sans-serif; font-weight: 800; }
.aa { display: flex; padding-left: 3px; font-size: 20px; }
.aa sup, .aa sub { font-size: 9.500px; line-height: 10px; font-weight: 400; color: #e95420; margin-left: -1px; }
.aa sup { align-self: flex-start; }
.aa sub { align-self: flex-end; margin-bottom: -1px; }
.pressed { display: grid; place-items: center; width: 33px; height: 34px; border: 1px solid #c3c3c3; border-radius: 6px; background: #d9d9d9; }

.infobar { display: flex; align-items: center; width: 1148px; height: 40px; padding: 0 5px 1px 3px; border: 1px solid #c5c5c5; border-left: 0; background: #bde5f7; color: #111; }
.infobar p { margin-left: 6px; font-size: 14.200px; letter-spacing: -.04px; line-height: 19px; }
.infobar button { width: 130px; height: 33px; margin-left: auto; padding: 0 0 1px; border: 1px solid #ccc; border-radius: 6px; background: #fff; color: #3d3d3d; font: 14.200px "Noto Sans", sans-serif; letter-spacing: .1px; }
.close { margin-left: 6px; }

.work { position: relative; width: 1148px; height: 478px; padding: 1px 0 0 8px; border-right: 1px solid #bbb; }
.nums { font: 9.500px "Noto Sans", sans-serif; fill: #999; text-anchor: middle; }
.page { width: 819px; height: 450px; margin: 16px 0 0 149px; padding-top: 63px; border: 1px solid #949494; background: #fff; box-shadow: 0 0 5px #ccc; color: #000; }
.page p { margin: -1px 0 0 78px; font: 16px/18px "Liberation Serif", serif; }
.marks { display: flex; justify-content: space-between; padding: 0 62px 0 64px; }
.mk { width: 14px; height: 15px; border-bottom: 1px solid #c9c9c9; }
.mk.l { border-right: 1px solid #c9c9c9; }
.mk.r { border-left: 1px solid #c9c9c9; }
.scroll { position: absolute; right: 3px; top: 5px; width: 6px; height: 203px; border-radius: 3px; background: #858585; }

.paint { position: absolute; left: 1216px; top: 347px; width: 20px; height: 413px; border-left: 1px solid #2b7d9c; background: #cdd7e9; box-shadow: -3px 0 14px #0004; }
.paint-head { display: flex; align-items: center; height: 31px; padding-left: 8px; background: #2b7d9c; }
.thumb { margin: 5px 0 0 5px; }
```
